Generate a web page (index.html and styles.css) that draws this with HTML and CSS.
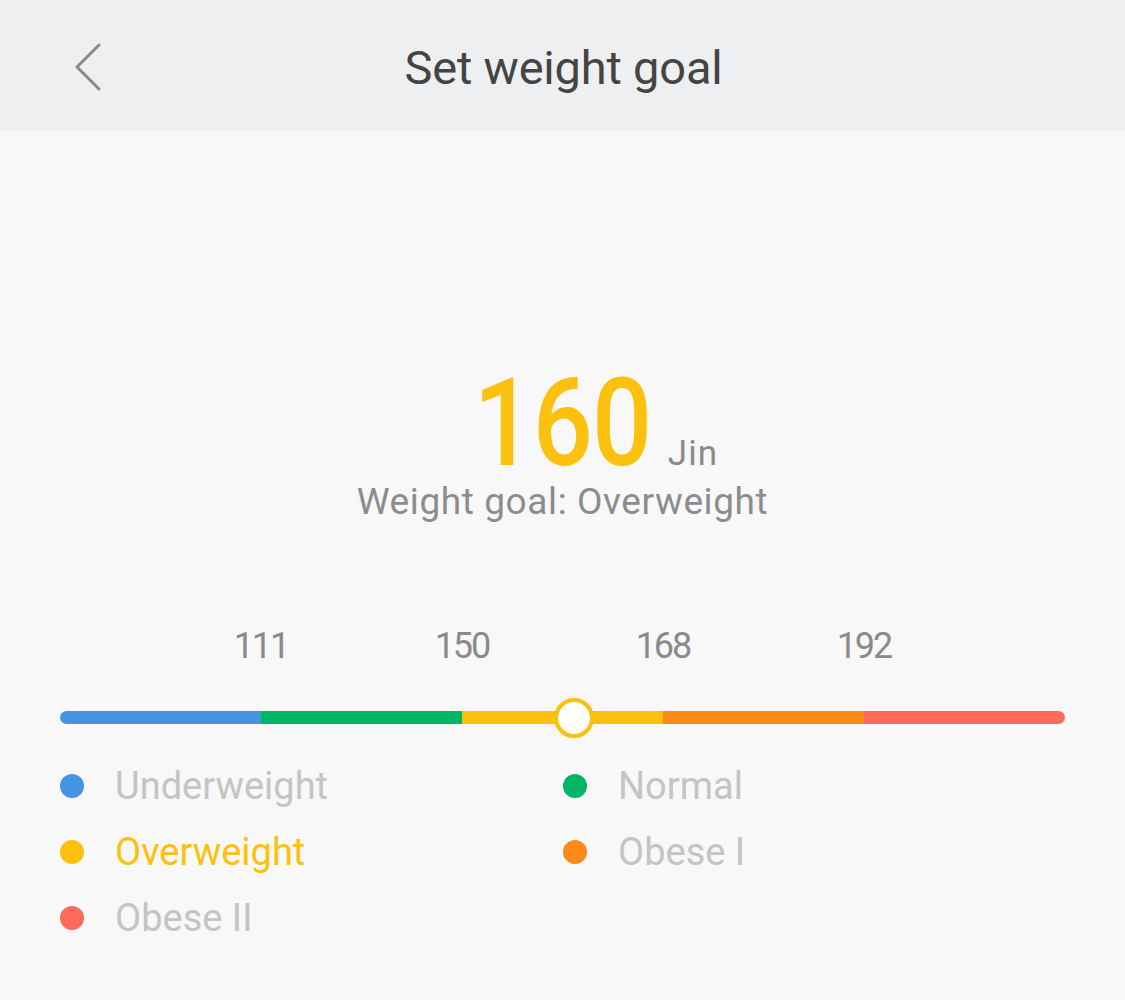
FILE: index.html
```html
<!DOCTYPE html>
<html>
<head>
<meta charset="utf-8">
<link rel="stylesheet" href="styles.css">
</head>
<body>
<div class="page">
  <header class="topbar">
    <svg class="back" width="28" height="48" viewBox="0 0 28 48"><path d="M25 2 L3 24 L25 46" fill="none" stroke="#8a8a8a" stroke-width="3" stroke-linecap="round" stroke-linejoin="round"/></svg>
    <h1 class="title">Set weight goal</h1>
  </header>
  <main class="content">
    <div class="value-row">
      <span class="spacer"></span><span class="value">160</span><span class="unit">Jin</span>
    </div>
    <div class="goal-text">Weight goal: Overweight</div>

    <div class="scale">
      <div class="ticks">
        <span class="tick">111</span>
        <span class="tick">150</span>
        <span class="tick">168</span>
        <span class="tick">192</span>
      </div>
      <div class="bar">
        <span class="seg blue"></span>
        <span class="seg green"></span>
        <span class="seg yellow"></span>
        <span class="seg orange"></span>
        <span class="seg red"></span>
        <span class="thumb" style="left: 51.1%"></span>
      </div>
    </div>

    <div class="legend">
      <div class="item"><span class="dot blue"></span><span class="label">Underweight</span></div>
      <div class="item"><span class="dot green"></span><span class="label">Normal</span></div>
      <div class="item active"><span class="dot yellow"></span><span class="label">Overweight</span></div>
      <div class="item"><span class="dot orange"></span><span class="label">Obese I</span></div>
      <div class="item"><span class="dot red"></span><span class="label">Obese II</span></div>
    </div>
  </main>
</div>
</body>
</html>
```

FILE: styles.css
```css
* { box-sizing: border-box; }
html, body {
  margin: 0;
  padding: 0;
  background: #f8f8f8;
  font-family: Roboto, "Noto Sans", "Liberation Sans", sans-serif;
}
.page {
  width: 1125px;
  height: 1000px;
  background: #f8f8f8;
}
.topbar {
  height: 131px;
  background: #eeeff1;
  display: flex;
  align-items: center;
  justify-content: center;
  position: relative;
}
.back {
  position: absolute;
  left: 74px;
  top: 43px;
}
.title {
  margin: 0;
  font-size: 47px;
  font-weight: 400;
  color: #444444;
  letter-spacing: -0.2px;
  margin-top: 4px;
  padding-left: 2px;
}
.content {
  display: flex;
  flex-direction: column;
  align-items: stretch;
}
.value-row {
  display: grid;
  grid-template-columns: 1fr auto 1fr;
  align-items: baseline;
  margin-top: 234px;
  height: 116px;
  line-height: 116px;
}
.value {
  display: inline-block;
  font-size: 123px;
  font-weight: 500;
  color: #fcc00e;
  letter-spacing: -1px;
  transform: scaleX(0.86);
  transform-origin: center;
}
.unit {
  font-size: 35px;
  color: #8a8a8a;
  margin-left: 2px;
  letter-spacing: 1px;
}
.goal-text {
  text-align: center;
  font-size: 37px;
  color: #8c8c8c;
  line-height: 40px;
  letter-spacing: 0.6px;
  margin-top: 1px;
}
.scale {
  margin: 104px 60px 0 60px;
}
.ticks {
  display: grid;
  grid-template-columns: repeat(5, 1fr);
  height: 85px;
}
.tick {
  transform: translateX(50%);
  text-align: center;
  font-size: 36px;
  color: #8a8a8a;
  line-height: 40px;
  letter-spacing: -2px;
}
.bar {
  position: relative;
  display: flex;
  height: 13px;
  border-radius: 7px;
}
.seg { flex: 1; height: 100%; }
.seg:first-child { border-radius: 7px 0 0 7px; }
.seg.red { border-radius: 0 7px 7px 0; }
.blue { background: #4593e3; }
.green { background: #00b566; }
.yellow { background: #fcc00e; }
.orange { background: #fb8a19; }
.red { background: #ff6a5a; }
.thumb {
  position: absolute;
  top: 50%;
  width: 40px;
  height: 40px;
  margin-left: -20px;
  margin-top: -20px;
  border-radius: 50%;
  background: #ffffff;
  border: 4px solid #fcc00e;
}
.legend {
  display: grid;
  grid-template-columns: 503px 1fr;
  margin: 29px 60px 0 60px;
}
.item {
  display: flex;
  align-items: center;
  height: 66px;
}
.dot {
  width: 24px;
  height: 24px;
  border-radius: 50%;
  flex: none;
}
.label {
  margin-left: 31px;
  font-size: 38px;
  color: #c4c4c4;
}
.item.active .label { color: #fcc00e; }
```
